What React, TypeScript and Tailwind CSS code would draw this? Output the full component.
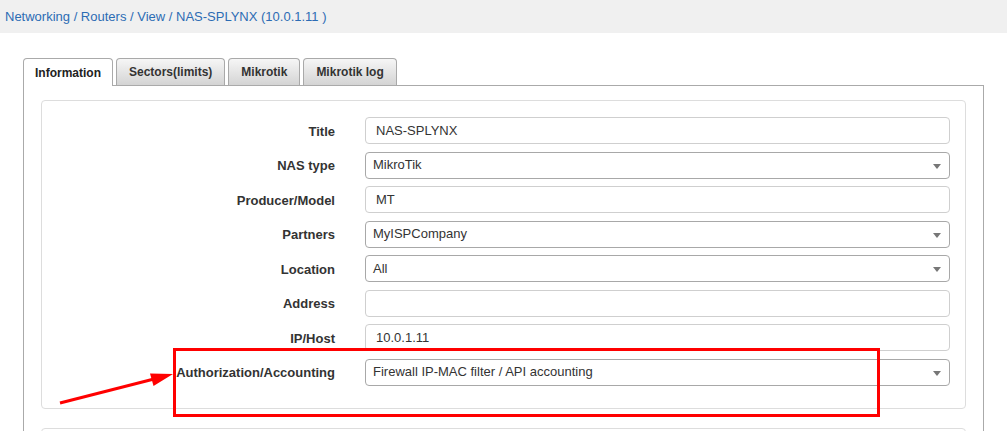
import React from 'react'

const rows: { label: string; value: string; kind: 'input' | 'select' }[] = [
  { label: 'Title', value: 'NAS-SPLYNX', kind: 'input' },
  { label: 'NAS type', value: 'MikroTik', kind: 'select' },
  { label: 'Producer/Model', value: 'MT', kind: 'input' },
  { label: 'Partners', value: 'MyISPCompany', kind: 'select' },
  { label: 'Location', value: 'All', kind: 'select' },
  { label: 'Address', value: '', kind: 'input' },
  { label: 'IP/Host', value: '10.0.1.11', kind: 'input' },
  { label: 'Authorization/Accounting', value: 'Firewall IP-MAC filter / API accounting', kind: 'select' },
]

const tabs = ['Information', 'Sectors(limits)', 'Mikrotik', 'Mikrotik log']

function Field({ value, kind }: { value: string; kind: 'input' | 'select' }) {
  if (kind === 'select') {
    return (
      <div className="relative flex h-[27px] items-center rounded-[4px] border border-[#a8a8a8] bg-white pl-[7px] text-[13px] text-[#333]">
        {value}
        <span className="absolute right-[8px] top-[11px] h-0 w-0 border-x-[4px] border-t-[5px] border-x-transparent border-t-[#777]" />
      </div>
    )
  }
  return (
    <div className="flex h-[27px] items-center rounded-[4px] border border-[#cfcfcf] bg-white pl-[10px] text-[13px] text-[#333]">
      {value}
    </div>
  )
}

export default function App() {
  return (
    <div className="relative h-[431px] w-full overflow-hidden bg-white font-['Liberation_Sans',Arial,sans-serif]">
      <div className="flex h-[33px] items-center bg-[#f0f0f0] px-[5px] text-[13px] text-[#2c6cb4]">
        Networking / Routers / View / NAS-SPLYNX (10.0.1.11 )
      </div>

      <div className="pl-[23px] pr-[23px] pt-[25px]">
        <div className="flex h-[27px] items-end gap-[3px]">
          {tabs.map((t, i) =>
            i === 0 ? (
              <div
                key={t}
                className="relative z-10 -mb-px flex h-[28px] items-center rounded-t-[4px] border border-b-0 border-[#aaa] bg-white px-[11px] text-[12px] font-bold text-[#222]"
              >
                {t}
              </div>
            ) : (
              <div
                key={t}
                className="flex h-[27px] items-center rounded-t-[4px] border border-b-0 border-[#a9a9a9] bg-gradient-to-b from-[#f6f6f6] to-[#d4d4d4] px-[12px] text-[12px] font-bold text-[#333]"
              >
                {t}
              </div>
            )
          )}
        </div>

        <div className="h-[400px] border border-[#aaa] pl-[17px] pr-[17px] pt-[14px]">
          <div className="rounded-[4px] border border-[#ddd] pb-[22px] pr-[15px] pt-[16px]">
            <div className="flex flex-col gap-[7.5px]">
              {rows.map((r) => (
                <div key={r.label} className="grid grid-cols-[293px_1fr] items-center gap-x-[30px]">
                  <div className="pt-[2px] text-right text-[13px] font-bold text-[#333]">{r.label}</div>
                  <Field value={r.value} kind={r.kind} />
                </div>
              ))}
            </div>
          </div>
          <div className="mt-[19px] h-[40px] rounded-[4px] border border-[#ddd]" />
        </div>
      </div>

      <svg className="pointer-events-none absolute left-0 top-0" width="1007" height="431">
        <rect x="174.5" y="349.5" width="704" height="66" fill="none" stroke="#ff0000" strokeWidth="3" />
        <line x1="60" y1="403" x2="156" y2="378.5" stroke="#ff0000" strokeWidth="3" />
        <polygon points="173,374 150,373.5 153.5,386" fill="#ff0000" />
      </svg>
    </div>
  )
}
